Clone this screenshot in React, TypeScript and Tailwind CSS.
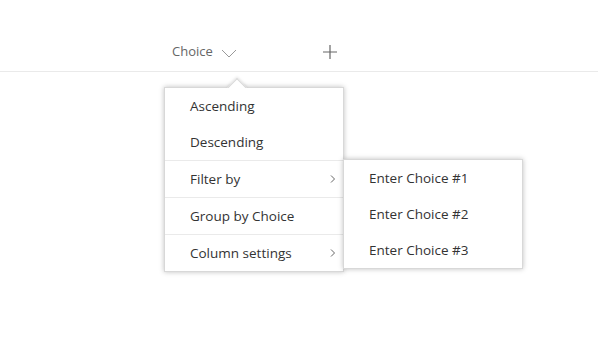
import React from "react";

const font = { fontFamily: '"Open Sans", "Noto Sans", Arial, sans-serif' };

const Chevron: React.FC = () => (
  <svg width="6" height="10" viewBox="0 0 6 10" className="text-[#666]">
    <path d="M1 1.5 L4.5 5 L1 8.5" fill="none" stroke="currentColor" strokeWidth="1" />
  </svg>
);

const Item: React.FC<{ label: string; sub?: boolean; sep?: boolean; children?: React.ReactNode }> = ({
  label,
  sub,
  sep,
  children,
}) => (
  <div className={`relative ${sep ? "border-t border-[#eaeaea]" : ""}`}>
    <div className="flex items-center h-9 pl-[25px] pr-[7px] text-[13.5px] text-[#333]">
      <span className="flex-1">{label}</span>
      {sub && <Chevron />}
    </div>
    {children}
  </div>
);

export default function App() {
  return (
    <div className="w-[598px] h-[339px] bg-white overflow-hidden" style={font}>
      <div className="flex items-center h-[72px] border-b border-[#eaeaea] pl-[172px] pt-[33px]">
        <span className="text-[13px] text-[#666]">Choice</span>
        <svg width="16" height="9" viewBox="0 0 16 9" className="ml-[8px] mt-[3px] text-[#999]">
          <path d="M1 1 L8 8 L15 1" fill="none" stroke="currentColor" strokeWidth="1" />
        </svg>
        <svg width="16" height="16" viewBox="0 0 16 16" className="ml-[85px] -mt-[1px] text-[#666]">
          <path d="M8 1 V15 M1 8 H15" fill="none" stroke="currentColor" strokeWidth="1.2" />
        </svg>
      </div>
      <div className="relative ml-[164px] mt-[15px] w-[180px] bg-white border border-[#d8d8d8] shadow-[0_0_5px_rgba(0,0,0,0.25)]">
        <div className="absolute -top-[7px] left-[65px] w-[14px] h-[14px] rotate-45 bg-white border-l border-t border-[#d8d8d8] shadow-[-1px_-1px_3px_rgba(0,0,0,0.12)]" />
        <div className="relative bg-white">
          <Item label="Ascending" />
          <Item label="Descending" />
          <Item label="Filter by" sub sep>
            <div className="absolute left-full -top-[2px] w-[180px] bg-white border border-[#d8d8d8] shadow-[0_0_5px_rgba(0,0,0,0.25)] z-10">
              {["Enter Choice #1", "Enter Choice #2", "Enter Choice #3"].map((c) => (
                <div key={c} className="flex items-center h-9 pl-[25px] text-[13.5px] text-[#333]">
                  {c}
                </div>
              ))}
            </div>
          </Item>
          <Item label="Group by Choice" sep />
          <Item label="Column settings" sub sep />
        </div>
      </div>
    </div>
  );
}
